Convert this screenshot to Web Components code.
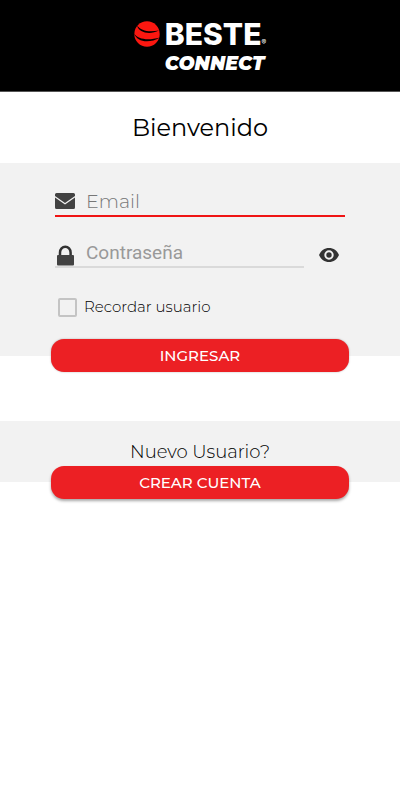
<!DOCTYPE html>
<html lang="es">
<head>
<meta charset="utf-8">
<meta name="viewport" content="width=device-width, initial-scale=1">
<title>Beste Connect</title>
<style>
  body {
    margin: 0;
    background: #fff;
    color: #111;
    font-family: Montserrat, Inter, sans-serif;
  }

  h1 {
    margin: 0;
    font-size: 24px;
    font-weight: 400;
    line-height: 71px;
    text-align: center;
    color: #000;
  }
</style>
</head>
<body>
<brand-header></brand-header>
<main>
  <h1>Bienvenido</h1>
  <action-panel>
    <text-field type="email" label="Email" active>
      <svg slot="icon" width="20" height="16" viewBox="0 0 20 16" fill="#424242">
        <path d="M1.500 0h17A1.500 1.500 0 0 1 20 1.500V3l-10 7L0 3V1.500A1.500 1.500 0 0 1 1.500 0z"/>
        <path d="M0 4.500l10 7 10-7v10a1.500 1.500 0 0 1-1.500 1.500h-17A1.500 1.500 0 0 1 0 14.500z"/>
      </svg>
    </text-field>
    <text-field type="password" label="Contraseña">
      <svg slot="icon" width="20" height="21" viewBox="0 0 20 21">
        <path d="M5 11V7.500a5.300 5.800 0 0 1 10.600 0V11" fill="none" stroke="#333" stroke-width="2.500"/>
        <rect x="2" y="10" width="17" height="10.500" rx="1" fill="#424242"/>
      </svg>
    </text-field>
    <check-field label="Recordar usuario"></check-field>
    <pill-button slot="action">INGRESAR</pill-button>
  </action-panel>
  <action-panel compact>
    <span>Nuevo Usuario?</span>
    <pill-button slot="action" raised>CREAR CUENTA</pill-button>
  </action-panel>
</main>

<script>
// logo bar at the top of the page
class BrandHeader extends HTMLElement {
  constructor() {
    super();
    this.attachShadow({ mode: 'open' });
    this.shadowRoot.innerHTML = `
      <style>
        :host {
          display: block;
          background: #000;
          color: #fff;
          border-bottom: 1px solid #555;
        }

        header {
          display: grid;
          grid-template-columns: 26px auto;
          gap: 3px 5px;
          justify-content: center;
          align-items: center;
          padding: 18px 0 16px;
        }

        .name {
          height: 32px;
          font: 800 30px/32px Inter, sans-serif;
          white-space: nowrap;
        }

        .name small {
          font-size: 7px;
          font-weight: 400;
          line-height: 1;
        }

        .product {
          grid-column: 2;
          font: italic 900 19px/22px Montserrat, sans-serif;
        }
      </style>
      <header>
        <svg width="26" height="26" viewBox="0 0 26 26">
          <circle cx="13" cy="13" r="12.700" fill="#fb1710"/>
          <path d="M3 4.500C7 9.500 14 11.500 25 9.500C16 14 5 12 3 4.500z" fill="#000"/>
          <path d="M0 12.500C4 18 13 20 26 16.500C15 23 3 21 0 12.500z" fill="#000"/>
        </svg>
        <div class="name">BESTE<small>®</small></div>
        <div class="product">CONNECT</div>
      </header>
    `;
  }
}

// grey band with a button lying over its lower edge
class ActionPanel extends HTMLElement {
  constructor() {
    super();
    this.attachShadow({ mode: 'open' });
    this.shadowRoot.innerHTML = `
      <style>
        :host {
          display: block;
          margin-bottom: 49px;
        }

        .band {
          display: flex;
          flex-direction: column;
          gap: 20px;
          padding: 23px 55px 39px;
          background: #f2f2f2;
        }

        :host([compact]) .band {
          align-items: center;
          padding: 20px 55px 18px;
          color: #000;
          font-size: 18px;
          font-weight: 300;
          line-height: 23px;
        }

        .action {
          margin: -17px 51px 0;
        }

        :host([compact]) .action {
          margin-top: -16px;
        }
      </style>
      <div class="band"><slot></slot></div>
      <div class="action"><slot name="action"></slot></div>
    `;
  }
}

class TextField extends HTMLElement {
  constructor() {
    super();
    this.attachShadow({ mode: 'open' });
    const type = this.getAttribute('type') || 'text';
    const label = this.getAttribute('label') || '';
    this.shadowRoot.innerHTML = `
      <style>
        * {
          box-sizing: border-box;
        }

        :host {
          display: flex;
          align-items: center;
          gap: 14px;
        }

        .line {
          display: flex;
          flex: 1;
          align-items: center;
          gap: 11px;
          min-width: 0;
          height: 31px;
          border-bottom: 2px solid #dadada;
        }

        :host([active]) .line {
          border-color: #f01414;
        }

        input {
          flex: 1;
          min-width: 0;
          height: 29px;
          padding: 1px 0 0;
          border: 0;
          outline: 0;
          background: none;
          color: #111;
          font: 300 19px Montserrat, Inter, sans-serif;
        }

        input[type="password"] {
          font: 400 19px Roboto, sans-serif;
        }

        input::placeholder {
          color: #777;
          opacity: 1;
        }

        input[type="password"]::placeholder {
          color: #999;
        }

        ::slotted(svg) {
          display: block;
        }

        :host([type="password"]) .line {
          align-items: flex-end;
        }

        button {
          display: flex;
          align-items: center;
          justify-content: center;
          width: 22px;
          height: 22px;
          margin: 4px 5px 0 0;
          padding: 0;
          border: 0;
          background: none;
          cursor: pointer;
        }
      </style>
      <div class="line">
        <slot name="icon"></slot>
        <input type="${type}" placeholder="${label}" aria-label="${label}">
      </div>
      ${type === 'password' ? this._eye() : ''}
    `;
    this._addEventListeners();
  }

  _eye() {
    return `
      <button type="button" aria-label="Mostrar contraseña">
        <svg width="20" height="14" viewBox="0 0 20 14">
          <path d="M0 7C2 2.500 5.500 0 10 0s8 2.500 10 7c-2 4.500-5.500 7-10 7S2 11.500 0 7z" fill="#333"/>
          <circle cx="10" cy="7" r="3.700" fill="#333" stroke="#f2f2f2" stroke-width="2"/>
        </svg>
      </button>
    `;
  }

  _addEventListeners() {
    const button = this.shadowRoot.querySelector('button');
    if (!button) return;
    const input = this.shadowRoot.querySelector('input');
    button.addEventListener('click', () => {
      input.type = input.type === 'password' ? 'text' : 'password';
    });
  }
}

class CheckField extends HTMLElement {
  constructor() {
    super();
    this.attachShadow({ mode: 'open' });
    this.shadowRoot.innerHTML = `
      <style>
        :host {
          display: block;
          padding: 9px 3px 0;
        }

        label {
          display: flex;
          align-items: center;
          gap: 7px;
          font-size: 15px;
          font-weight: 300;
          line-height: 20px;
          color: #000;
        }

        input {
          appearance: none;
          box-sizing: border-box;
          width: 19px;
          height: 19px;
          margin: 0;
          border: 2px solid #c4c4c4;
          border-radius: 2px;
        }

        input:checked {
          border-color: #ec2024;
          background: #ec2024;
        }
      </style>
      <label><input type="checkbox">${this.getAttribute('label')}</label>
    `;
  }
}

class PillButton extends HTMLElement {
  constructor() {
    super();
    this.attachShadow({ mode: 'open' });
    this.shadowRoot.innerHTML = `
      <style>
        :host {
          display: block;
        }

        button {
          display: block;
          width: 100%;
          height: 33px;
          padding: 0;
          border: 0;
          border-radius: 13px;
          background: #ec2024;
          box-shadow: 0 0 2px rgba(0, 0, 0, 0.3);
          color: #fff;
          font: 500 15px Montserrat, Inter, sans-serif;
          cursor: pointer;
        }

        :host([raised]) button {
          box-shadow: 0 2px 3px rgba(0, 0, 0, 0.35);
        }
      </style>
      <button type="button"><slot></slot></button>
    `;
  }
}

customElements.define('brand-header', BrandHeader);
customElements.define('action-panel', ActionPanel);
customElements.define('text-field', TextField);
customElements.define('check-field', CheckField);
customElements.define('pill-button', PillButton);
</script>
</body>
</html>
